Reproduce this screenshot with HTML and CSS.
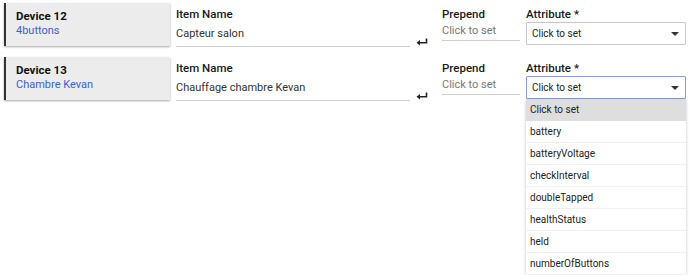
FILE: index.html
```html
<!DOCTYPE html>
<html lang="fr">
<head>
  <meta charset="UTF-8" />
  <meta name="viewport" content="width=device-width, initial-scale=1" />
  <title>Devices</title>
  <link rel="stylesheet" href="styles.css">
</head>
<body>

  <div class="row">
    <div class="device">
      <div class="device-title">Device 12</div>
      <div class="device-link">4buttons</div>
    </div>
    <div class="field name">
      <div class="label">Item Name</div>
      <div class="input">Capteur salon</div>
    </div>
    <div class="enter">
      <svg width="12" height="8" viewBox="0 0 12 8"><path d="M10.5 0.5 V4.8 H3" fill="none" stroke="#222" stroke-width="1.6"/><path d="M0.5 4.8 L4 2 V7.6 Z" fill="#222"/></svg>
    </div>
    <div class="field prepend">
      <div class="label">Prepend</div>
      <div class="placeholder">Click to set</div>
    </div>
    <div class="field attr">
      <div class="label">Attribute *</div>
      <div class="select">Click to set<span class="caret"></span></div>
    </div>
  </div>

  <div class="row">
    <div class="device">
      <div class="device-title">Device 13</div>
      <div class="device-link">Chambre Kevan</div>
    </div>
    <div class="field name">
      <div class="label">Item Name</div>
      <div class="input">Chauffage chambre Kevan</div>
    </div>
    <div class="enter">
      <svg width="12" height="8" viewBox="0 0 12 8"><path d="M10.5 0.5 V4.8 H3" fill="none" stroke="#222" stroke-width="1.6"/><path d="M0.5 4.8 L4 2 V7.6 Z" fill="#222"/></svg>
    </div>
    <div class="field prepend">
      <div class="label">Prepend</div>
      <div class="placeholder">Click to set</div>
    </div>
    <div class="field attr">
      <div class="label">Attribute *</div>
      <div class="select open">Click to set<span class="caret"></span></div>
      <ul class="menu">
        <li class="active">Click to set</li>
        <li>battery</li>
        <li>batteryVoltage</li>
        <li>checkInterval</li>
        <li>doubleTapped</li>
        <li>healthStatus</li>
        <li>held</li>
        <li>numberOfButtons</li>
      </ul>
    </div>
  </div>

</body>
</html>
```

FILE: styles.css
```css
html, body {
  height: 100%;
}

body {
  margin: 0;
  font-family: Roboto, 'Noto Sans', sans-serif;
  background: #fff;
  color: #222;
}

.row {
  display: flex;
  align-items: flex-start;
  height: 54px;
  padding-top: 3px;
  box-sizing: border-box;
}

.device {
  margin-left: 4px;
  width: 166px;
  height: 43px;
  box-sizing: border-box;
  background: #ececec;
  border-left: 2px solid #333;
  box-shadow: 0 1px 2px rgba(0,0,0,0.35);
  padding: 6px 0 0 10px;
}

.device-title {
  font-size: 11.5px;
  font-weight: bold;
  line-height: 15px;
  color: #111;
}

.device-link {
  font-size: 11px;
  line-height: 14px;
  color: #3d5fd6;
}

.field {
  position: relative;
  padding-top: 4px;
}

.label {
  font-size: 11.5px;
  font-weight: 500;
  line-height: 15px;
  color: #1a1a1a;
}

.name {
  margin-left: 6px;
  width: 234px;
}

.input {
  height: 25px;
  line-height: 24px;
  font-size: 11px;
  color: #333;
  border-bottom: 1px solid #d0d0d0;
  box-sizing: border-box;
}

.enter {
  width: 32px;
  padding: 35px 0 0 6px;
  box-sizing: border-box;
}

.enter svg {
  display: block;
}

.prepend {
  width: 78px;
}

.placeholder {
  font-size: 11px;
  line-height: 17px;
  height: 18px;
  color: #777;
  border-bottom: 1px solid #d0d0d0;
}

.attr {
  margin-left: 6px;
  width: 160px;
}

.select {
  position: relative;
  height: 23px;
  box-sizing: border-box;
  border: 1px solid #c8c8c8;
  border-radius: 1px;
  font-size: 10px;
  line-height: 21px;
  padding-left: 5px;
  color: #222;
}

.select.open {
  border-color: #8e9be0;
}

.caret {
  position: absolute;
  right: 6px;
  top: 9px;
  width: 0;
  height: 0;
  border-left: 4px solid transparent;
  border-right: 4px solid transparent;
  border-top: 4px solid #333;
}

.menu {
  position: absolute;
  top: 42px;
  left: 0;
  width: 160px;
  margin: 0;
  padding: 0;
  list-style: none;
  background: #fff;
  box-shadow: 0 1px 3px rgba(0,0,0,0.25);
}

.menu li {
  height: 22px;
  line-height: 21px;
  font-size: 10px;
  padding-left: 4px;
  color: #222;
  border-bottom: 1px solid #f0f0f0;
  box-sizing: border-box;
}

.menu li.active {
  background: #dedede;
  border-bottom-color: #dedede;
}
```
